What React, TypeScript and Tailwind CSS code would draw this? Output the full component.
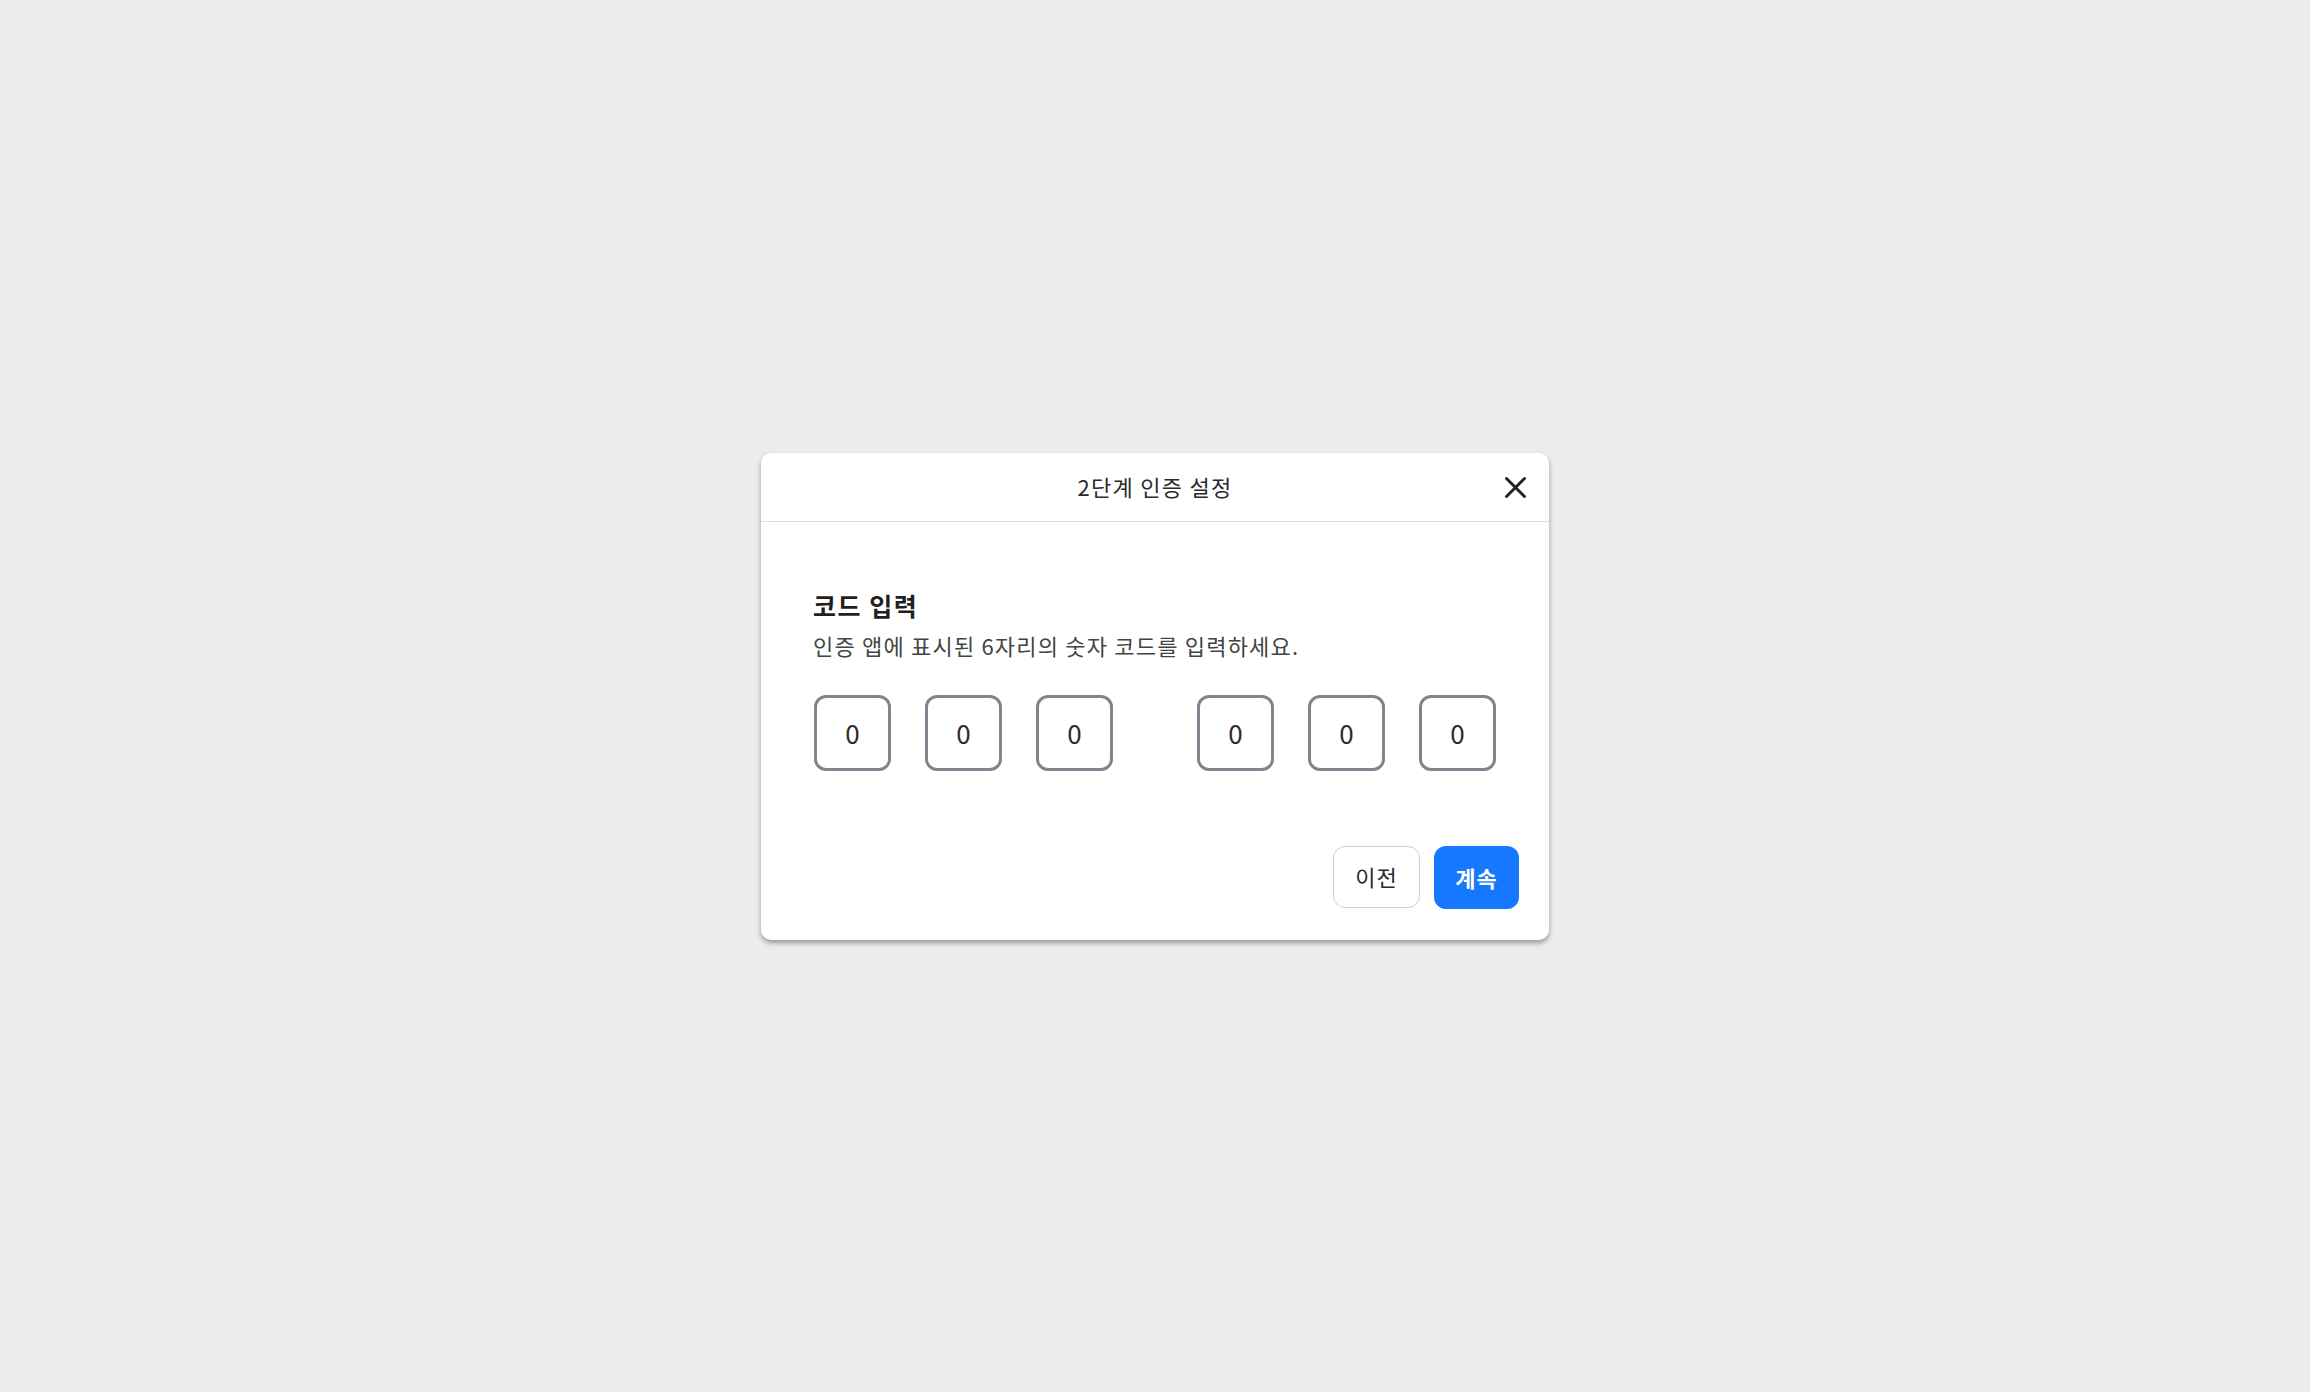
import type { FC } from "react";

const font = { fontFamily: '"Noto Sans CJK KR", "Noto Sans", sans-serif' };

const CodeBox: FC<{ value: string }> = ({ value }) => (
  <div className="w-[77px] h-[76px] rounded-[12px] border-[3px] border-[#83838f] bg-white flex items-center justify-center text-[26px] text-[#2b2b2b]">
    {value}
  </div>
);

export default function App() {
  const code = ["0", "0", "0", "0", "0", "0"];

  return (
    <div
      className="w-full min-h-screen h-[1392px] bg-[#ececec] flex items-center justify-center"
      style={font}
    >
      <div className="w-[788px] bg-white rounded-[10px] shadow-[0_3px_5px_rgba(0,0,0,0.35)]">
        {/* Header */}
        <div className="relative h-[69px] border-b border-[#dcdde3] flex items-center justify-center">
          <h1 className="text-[22px] tracking-[1.3px] text-[#2b2b2b]">2단계 인증 설정</h1>
          <button className="absolute right-[20px] top-[21px] w-[27px] h-[27px] flex items-center justify-center text-[#222]">
            <svg viewBox="0 0 24 24" className="w-[27px] h-[27px]" fill="none" stroke="currentColor" strokeWidth="2.6" strokeLinecap="round">
              <path d="M4 4l16 16M20 4L4 20" />
            </svg>
          </button>
        </div>

        {/* Body */}
        <div className="px-[53px] pt-[65px]">
          <h2 className="text-[25px] tracking-[1.5px] font-bold text-[#1f1f1f] leading-[36px] -ml-[1px]">코드 입력</h2>
          <p className="text-[22px] tracking-[1.2px] text-[#444] leading-[31px] -ml-[1px] mt-[7px]">
            인증 앱에 표시된 6자리의 숫자 코드를 입력하세요.
          </p>
          <div className="mt-[34px] flex items-center">
            <div className="flex gap-[34px]">
              {code.slice(0, 3).map((v, i) => (
                <CodeBox key={i} value={v} />
              ))}
            </div>
            <div className="w-[85px]" />
            <div className="flex gap-[34px]">
              {code.slice(3).map((v, i) => (
                <CodeBox key={i} value={v} />
              ))}
            </div>
          </div>
        </div>

        {/* Footer */}
        <div className="flex justify-end gap-[14px] px-[30px] pt-[75px] pb-[31px]">
          <button className="w-[87px] h-[62px] rounded-[12px] border-[1.5px] border-[#cfcfcf] bg-white text-[22px] tracking-[1px] text-[#2b2b2b]">
            이전
          </button>
          <button className="w-[85px] h-[63px] rounded-[12px] bg-[#1677ff] text-[22px] tracking-[1px] font-bold text-white">
            계속
          </button>
        </div>
      </div>
    </div>
  );
}
